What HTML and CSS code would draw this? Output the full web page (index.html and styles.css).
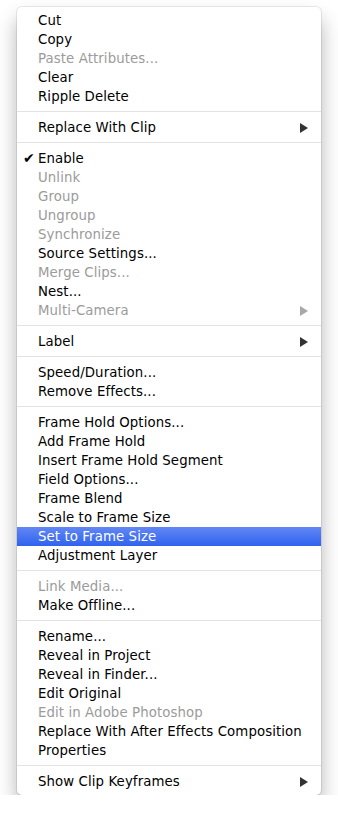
FILE: index.html
```html
<!DOCTYPE html>
<html>
<head>
    <title>Context Menu</title>
    <link rel="stylesheet" href="styles.css">
</head>
<body>
    <div class="menu">
        <ul class="menu-group">
            <li class="menu-item">Cut</li>
            <li class="menu-item">Copy</li>
            <li class="menu-item disabled">Paste Attributes...</li>
            <li class="menu-item">Clear</li>
            <li class="menu-item">Ripple Delete</li>
        </ul>
        <ul class="menu-group">
            <li class="menu-item submenu">Replace With Clip</li>
        </ul>
        <ul class="menu-group">
            <li class="menu-item checked">Enable</li>
            <li class="menu-item disabled">Unlink</li>
            <li class="menu-item disabled">Group</li>
            <li class="menu-item disabled">Ungroup</li>
            <li class="menu-item disabled">Synchronize</li>
            <li class="menu-item">Source Settings...</li>
            <li class="menu-item disabled">Merge Clips...</li>
            <li class="menu-item">Nest...</li>
            <li class="menu-item disabled submenu">Multi-Camera</li>
        </ul>
        <ul class="menu-group">
            <li class="menu-item submenu">Label</li>
        </ul>
        <ul class="menu-group">
            <li class="menu-item">Speed/Duration...</li>
            <li class="menu-item">Remove Effects...</li>
        </ul>
        <ul class="menu-group">
            <li class="menu-item">Frame Hold Options...</li>
            <li class="menu-item">Add Frame Hold</li>
            <li class="menu-item">Insert Frame Hold Segment</li>
            <li class="menu-item">Field Options...</li>
            <li class="menu-item">Frame Blend</li>
            <li class="menu-item">Scale to Frame Size</li>
            <li class="menu-item selected">Set to Frame Size</li>
            <li class="menu-item">Adjustment Layer</li>
        </ul>
        <ul class="menu-group">
            <li class="menu-item disabled">Link Media...</li>
            <li class="menu-item">Make Offline...</li>
        </ul>
        <ul class="menu-group">
            <li class="menu-item">Rename...</li>
            <li class="menu-item">Reveal in Project</li>
            <li class="menu-item">Reveal in Finder...</li>
            <li class="menu-item">Edit Original</li>
            <li class="menu-item disabled">Edit in Adobe Photoshop</li>
            <li class="menu-item">Replace With After Effects Composition</li>
            <li class="menu-item">Properties</li>
        </ul>
        <ul class="menu-group">
            <li class="menu-item submenu">Show Clip Keyframes</li>
        </ul>
    </div>
</body>
</html>
```

FILE: styles.css
```css
body {
    margin: 0;
    background-color: #FFFFFF;
    font-family: "DejaVu Sans", "Liberation Sans", sans-serif;
    font-size: 13.3px;
    letter-spacing: 0.1px;
}
.menu {
    width: 304px;
    margin: 7px 0 0 17px;
    padding: 4px 0;
    background-color: #FFFFFF;
    border-radius: 5px;
    box-shadow: 0 0 0 1px rgba(0, 0, 0, 0.08), 0 12px 20px rgba(0, 0, 0, 0.3);
}
.menu-group {
    list-style-type: none;
    margin: 0;
    padding: 0;
    border-bottom: 1px solid #E3E3E3;
    padding-bottom: 5px;
    margin-bottom: 6px;
}
.menu-group:last-child {
    border-bottom: none;
    padding-bottom: 0;
    margin-bottom: 0;
}
.menu-item {
    position: relative;
    height: 19px;
    line-height: 19px;
    padding-left: 21px;
    color: #000000;
    white-space: nowrap;
}
.disabled {
    color: #9B9B9B;
}
.checked::before {
    content: "\2714";
    position: absolute;
    left: 6px;
    top: 0;
    font-size: 14px;
}
.submenu::after {
    content: "";
    position: absolute;
    right: 13px;
    top: 5px;
    border-left: 8px solid #333333;
    border-top: 5px solid transparent;
    border-bottom: 5px solid transparent;
}
.disabled.submenu::after {
    border-left-color: #A8A8A8;
}
.selected {
    color: #FFFFFF;
    background: linear-gradient(#6287F3, #2F63EF);
}
```
